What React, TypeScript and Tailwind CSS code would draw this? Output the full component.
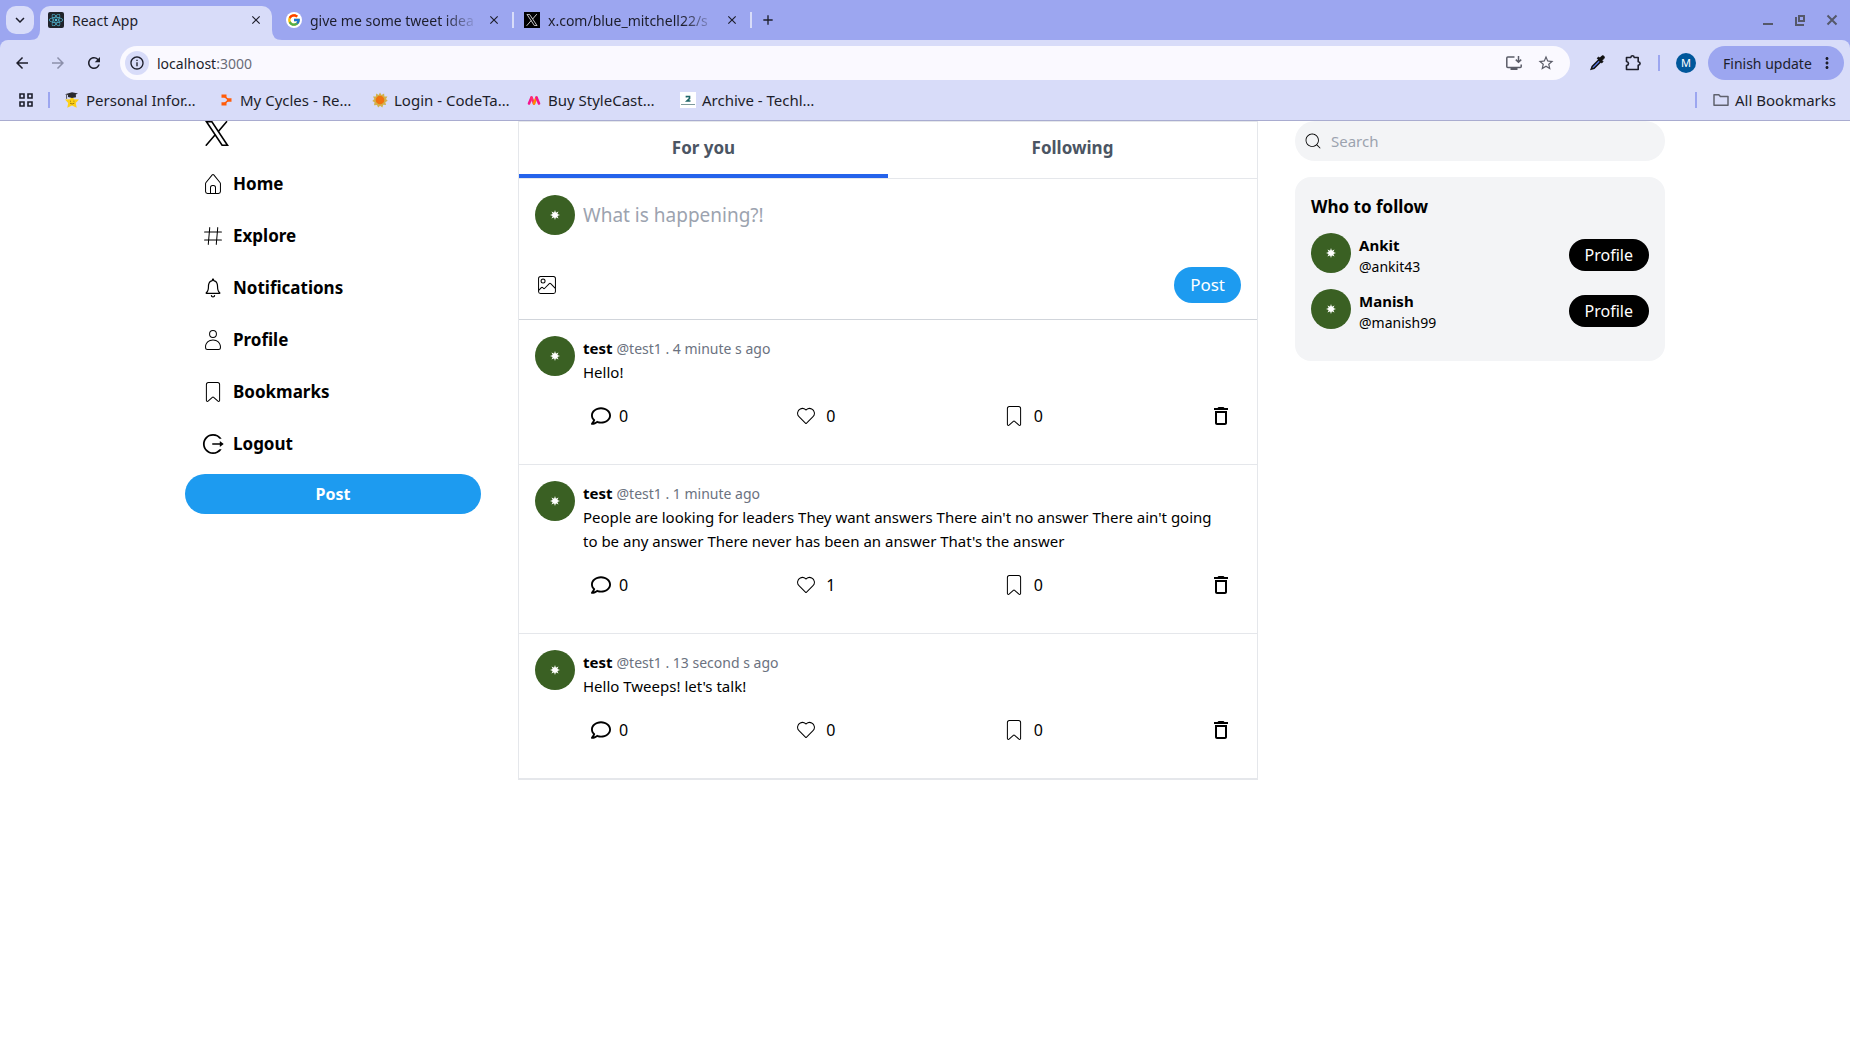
import type { ReactNode } from "react";
import { AiOutlineLogout } from "react-icons/ai";
import { CiBookmark, CiHashtag, CiHeart, CiHome, CiImageOn, CiSearch, CiUser } from "react-icons/ci";
import { FaReact, FaRegComment } from "react-icons/fa";
import { FcGoogle } from "react-icons/fc";
import { IoIosNotificationsOutline } from "react-icons/io";
import {
  MdAdd,
  MdArrowBack,
  MdArrowForward,
  MdClose,
  MdExpandMore,
  MdMoreVert,
  MdOutlineDelete,
  MdOutlineInfo,
  MdRefresh,
  MdStarOutline,
} from "react-icons/md";

function XMark({ className }: { className: string }) {
  return (
    <svg viewBox="0 0 24 25" fill="none" stroke="currentColor" strokeWidth="1.6" className={className} aria-hidden="true">
      <path d="M1.5 .8h5.4l15.6 23.4h-5.4z" />
      <path d="M22 .3 13.3 10.6M.8 24.7l9.6-11.2" />
    </svg>
  );
}

function StarGrad() {
  return (
    <svg viewBox="0 0 16 16" className="size-4" aria-hidden="true">
      <path d="m8 3.8 2 3.4 5 .4-3.2 3.3.9 4.9L8 13.6l-4.7 2.2.9-4.9L1 7.6l5-.4z" fill="#fdd017" />
      <path d="M1 2.2 8 .2l6 1.4-2.2 1 .2 2.6-4 .7-4-.9v-2z" fill="#2a2a2e" />
      <path d="M2.6 2.8v4" stroke="#2a2a2e" strokeWidth=".8" />
      <path d="M6 9.2h1M9.4 9.2h1M6 11.2q2.2 1.6 4.3 0" stroke="#8a6a00" strokeWidth=".8" fill="none" />
    </svg>
  );
}

function Cycles() {
  return (
    <svg viewBox="0 0 16 16" className="size-4" aria-hidden="true">
      <path d="M3.5 2.5h5v3.2h-5zM3.5 10.3h5v3.2h-5zM9 6.3h4.5v3.4H9z" fill="#ff5c0a" />
      <path d="m6 4 4.5 4L6 12" stroke="#ff5c0a" strokeWidth="1.6" fill="none" />
    </svg>
  );
}

function Sun() {
  return (
    <svg viewBox="0 0 16 16" className="size-4" aria-hidden="true">
      <path
        d="m8 .5 1.500 2.600 2.600-1.600.3 3 3-.1-1.400 2.700 1.700 1.700-2.400 1.400.8 2.700-2.900-.2-.8 2.700-2.300-1.600-2 1.700-1.100-2.600-3 .3.500-2.900L.3 9l2-1.900L1 4.600l2.900-.2L4.200 1.500l2.500 1.400z"
        fill="#d3b04a"
      />
      <circle cx="8" cy="8" r="4.3" fill="#f0720f" />
    </svg>
  );
}

function MShape() {
  return (
    <svg viewBox="0 0 16 16" className="size-4" fill="none" strokeWidth="2.6" strokeLinecap="round" aria-hidden="true">
      <path d="m3 11.5 2.5-6" stroke="#f5138f" />
      <path d="m5.5 5.5 2.5 6" stroke="#ff2d6c" />
      <path d="m8 11.5 2.5-6" stroke="#ff8a00" />
      <path d="m10.5 5.5 2.5 6" stroke="#f5138f" />
    </svg>
  );
}

function ArchiveMark() {
  return (
    <svg viewBox="0 0 16 16" className="size-4" aria-hidden="true">
      <path d="M0 0h16v16H0z" fill="#fff" />
      <path d="M6.5 5.5v-1h3v2L7 9h3.5" stroke="#1f6668" strokeWidth="1.7" fill="none" />
      <path d="M1 12.5h14" stroke="#7d9a9c" />
    </svg>
  );
}

function TabFoot({ side }: { side: "left" | "right" }) {
  return (
    <svg
      viewBox="0 0 10 10"
      className={side === "left" ? "absolute bottom-0 right-full size-2.5" : "absolute bottom-0 left-full size-2.5"}
      aria-hidden="true"
    >
      <path d={side === "left" ? "M10 0v10H0Q10 10 10 0z" : "M0 0v10h10Q0 10 0 0z"} fill="#d8dcf9" />
    </svg>
  );
}

function BrowserTab({ icon, title, active = false }: { icon: ReactNode; title: string; active?: boolean }) {
  return (
    <div
      className={
        active
          ? "relative flex h-[34px] w-[232px] items-center gap-2 rounded-t-[10px] bg-[#d8dcf9] px-2 pb-1.5"
          : "flex h-[34px] w-[238px] items-center gap-2 pb-1.5 pl-3.5 pr-2"
      }
    >
      {active && <TabFoot side="left" />}
      {active && <TabFoot side="right" />}
      {icon}
      <span
        className={
          active
            ? "flex-1 overflow-hidden whitespace-nowrap"
            : "flex-1 overflow-hidden whitespace-nowrap mask-r-from-80% mask-r-to-100%"
        }
      >
        {title}
      </span>
      <button type="button" aria-label={`Close ${title}`} className="flex size-4 items-center justify-center">
        <MdClose className="size-3.5" />
      </button>
      {!active && <span className="-mr-3 ml-0.5 h-4 w-0.5 bg-[#d8dcf9]" />}
    </div>
  );
}

const bookmarks = [
  { icon: <StarGrad />, label: "Personal Infor…" },
  { icon: <Cycles />, label: "My Cycles - Re…" },
  { icon: <Sun />, label: "Login - CodeTa…" },
  { icon: <MShape />, label: "Buy StyleCast…" },
  { icon: <ArchiveMark />, label: "Archive - Techl…" },
];

function Browser() {
  return (
    <header className="bg-[#9ca6f0] text-[#1d1e2b]">
      <div className="flex h-10 items-start pl-1.5 pt-1.5 text-[14px]">
        <button type="button" aria-label="Search tabs" className="mr-1.5 flex size-7 items-center justify-center rounded-[10px] bg-[#d8dcf9]">
          <MdExpandMore className="size-[18px]" />
        </button>
        <BrowserTab
          active
          title="React App"
          icon={
            <span className="flex size-4 items-center justify-center rounded-xs bg-[#20232a]">
              <FaReact className="size-3.5 text-[#53c1de]" />
            </span>
          }
        />
        <BrowserTab
          title="give me some tweet idea"
          icon={
            <span className="flex size-4 items-center justify-center rounded-full bg-white">
              <FcGoogle className="size-3.5" />
            </span>
          }
        />
        <BrowserTab
          title="x.com/blue_mitchell22/s"
          icon={
            <span className="flex size-4 items-center justify-center bg-black text-white">
              <XMark className="size-3" />
            </span>
          }
        />
        <button type="button" aria-label="New tab" className="ml-1.5 flex size-7 items-center justify-center">
          <MdAdd className="size-4" />
        </button>
        <div className="ml-auto flex h-7 items-center gap-[18px] pr-[11px] text-[#55586a]">
          <button type="button" aria-label="Minimize">
            <svg viewBox="0 0 14 14" className="size-3.5" aria-hidden="true">
              <path d="M2 11h10" stroke="currentColor" strokeWidth="2" />
            </svg>
          </button>
          <button type="button" aria-label="Restore">
            <svg viewBox="0 0 14 14" className="size-3.5" fill="none" stroke="currentColor" strokeWidth="2" aria-hidden="true">
              <path d="M6 3h5v5H6zM3 4v8h8" />
            </svg>
          </button>
          <button type="button" aria-label="Close window">
            <svg viewBox="0 0 14 14" className="size-3.5" fill="none" stroke="currentColor" strokeWidth="2" aria-hidden="true">
              <path d="m2.5 2.5 9 9M11.5 2.5l-9 9" />
            </svg>
          </button>
        </div>
      </div>

      <div className="rounded-t-lg border-b border-[#a9acd0] bg-[#d8dcf9]">
        <div className="flex h-10 items-end pl-3 pr-1.5 text-[14px]">
          <div className="flex h-[34px] items-center gap-4">
            <button type="button" aria-label="Back" className="flex w-5 justify-center">
              <MdArrowBack className="size-[18px]" />
            </button>
            <button type="button" aria-label="Forward" className="flex w-5 justify-center text-[#8c90ab]">
              <MdArrowForward className="size-[18px]" />
            </button>
            <button type="button" aria-label="Reload" className="flex w-5 justify-center">
              <MdRefresh className="size-[18px]" />
            </button>
          </div>
          <div className="ml-4 flex h-[34px] flex-1 items-center rounded-full bg-[#faf9ff] pl-[5px] pr-[15px]">
            <span className="flex size-6 items-center justify-center rounded-full bg-[#d8dcf9]">
              <MdOutlineInfo className="size-4" />
            </span>
            <span className="ml-2 flex-1">
              localhost<span className="text-[#6a6c78]">:3000</span>
            </span>
            <button type="button" aria-label="Install app" className="mr-3.5 text-[#5a5c68]">
              <svg viewBox="0 0 18 18" className="size-[18px]" fill="none" stroke="currentColor" strokeWidth="1.5" aria-hidden="true">
                <path d="M9.5 3H2.8q-1 0-1 1v8.5q0 1 1 1h12.4q1 0 1-1v-2M13.5 2v6M10.8 5.6l2.7 2.7 2.7-2.7" />
                <path d="M5.5 15h7" strokeWidth="2" />
              </svg>
            </button>
            <button type="button" aria-label="Bookmark this tab" className="text-[#5a5c68]">
              <MdStarOutline className="size-[18px]" />
            </button>
          </div>
          <div className="flex h-[34px] items-center">
            <button type="button" aria-label="Color picker" className="ml-[18px]">
              <svg viewBox="0 0 18 18" className="size-[18px]" aria-hidden="true">
                <path d="m3.2 15.2 1-2.8 6.600-6.600 1.900 1.900-6.600 6.600z" fill="#5b7cf0" stroke="#111" strokeWidth="1.5" />
                <path d="M9.2 4.3 10.6 3l1.100 1.100 1.900-1.900q1.300-1 2.300 0t0 2.300L14 6.400l1.100 1.100-1.400 1.400z" fill="#111" stroke="#111" />
              </svg>
            </button>
            <button type="button" aria-label="Extensions" className="ml-[18px]">
              <svg viewBox="0 0 18 18" className="size-[18px]" fill="none" stroke="currentColor" strokeWidth="1.6" strokeLinejoin="round" aria-hidden="true">
                <path d="M2.5 3.5h4.3q.2-1.7 1.7-1.7t1.7 1.7h4v4.3q1.900.2 1.900 1.700t-1.900 1.700v4.300H2.500v-4q2-.3 2-2t-2-2z" />
              </svg>
            </button>
            <span className="ml-4 h-4 w-0.5 bg-[#9ca6f0]" />
            <span className="ml-4 flex size-5 items-center justify-center rounded-full bg-[#00579b] text-[11px] text-white">M</span>
            <button type="button" className="ml-3 flex h-[34px] w-[136px] items-center justify-between rounded-full bg-[#9ca6f0] pl-[15px] pr-2">
              Finish update
              <MdMoreVert className="size-[18px]" />
            </button>
          </div>
        </div>

        <nav aria-label="Bookmarks bar" className="flex h-10 items-center pl-[18px] pr-3.5 text-[15px]">
          <button type="button" aria-label="Tab groups">
            <svg viewBox="0 0 16 16" className="size-4" fill="none" stroke="currentColor" strokeWidth="1.6" aria-hidden="true">
              <path d="M2 2h4v4H2zM10 2h4v4h-4zM2 10h4v4H2zM10 10h4v4h-4z" />
            </svg>
          </button>
          <span className="mx-3.5 h-4 w-0.5 bg-[#9ca6f0]" />
          {bookmarks.map((b) => (
            <a key={b.label} href="#" className="flex w-[154px] items-center gap-1.5 whitespace-nowrap">
              {b.icon}
              {b.label}
            </a>
          ))}
          <span className="ml-auto h-4 w-0.5 bg-[#9ca6f0]" />
          <button type="button" className="ml-4 flex items-center gap-1.5">
            <svg viewBox="0 0 16 16" className="size-4" fill="none" stroke="#5f616e" strokeWidth="1.5" strokeLinejoin="round" aria-hidden="true">
              <path d="M1 2.8h4.8l1.6 1.8H15v8.6H1z" />
            </svg>
            All Bookmarks
          </button>
        </nav>
      </div>
    </header>
  );
}

function Avatar() {
  return (
    <svg viewBox="0 0 40 40" className="size-10 shrink-0" aria-hidden="true">
      <circle cx="20" cy="20" r="20" fill="#3a6023" />
      <path
        d="m20 15 .9 2.700 2.600-1.200-1.200 2.600 2.700.9-2.700.9 1.200 2.600-2.600-1.200L20 25l-.9-2.700-2.600 1.200 1.200-2.600L15 20l2.700-.9-1.200-2.600 2.600 1.200z"
        fill="#fff"
      />
      <circle cx="20" cy="20" r="2.5" fill="#fff" />
    </svg>
  );
}

const nav = [
  { icon: CiHome, label: "Home" },
  { icon: CiHashtag, label: "Explore" },
  { icon: IoIosNotificationsOutline, label: "Notifications" },
  { icon: CiUser, label: "Profile" },
  { icon: CiBookmark, label: "Bookmarks" },
  { icon: AiOutlineLogout, label: "Logout" },
];

function LeftSidebar() {
  return (
    <aside className="w-[20%]">
      <a href="#" aria-label="X" className="block pb-3 pl-5">
        <XMark className="h-[25px] w-6" />
      </a>
      <nav>
        {nav.map(({ icon: Icon, label }) => (
          <a key={label} href="#" className="mb-2 flex h-11 items-center gap-2 px-4 text-[17px] font-bold first:mt-1 last:mb-1">
            <Icon className="size-6" />
            {label}
          </a>
        ))}
      </nav>
      <button type="button" className="mt-1 h-10 w-full rounded-full bg-[#1d9bf0] text-[16px] font-bold text-white">
        Post
      </button>
    </aside>
  );
}

const tweets = [
  { time: "4 minute s ago", text: "Hello!", likes: 0 },
  {
    time: "1 minute ago",
    text: "People are looking for leaders They want answers There ain't no answer There ain't going to be any answer There never has been an answer That's the answer",
    likes: 1,
  },
  { time: "13 second s ago", text: "Hello Tweeps! let's talk!", likes: 0 },
];

function Action({ label, count, children }: { label: string; count: number; children: ReactNode }) {
  return (
    <div className="flex items-center">
      <button type="button" aria-label={label} className="p-2">
        {children}
      </button>
      <span>{count}</span>
    </div>
  );
}

function Tweet({ time, text, likes }: { time: string; text: string; likes: number }) {
  return (
    <article className="flex gap-2 border-b border-[#e5e7eb] p-4">
      <Avatar />
      <div className="flex-1">
        <div className="flex h-6 items-center gap-1">
          <h2 className="text-[15px] font-bold">test</h2>
          <p className="text-[14px] text-[#6b7280]">@test1 . {time}</p>
        </div>
        <p className="pr-4 text-[15px] leading-6">{text}</p>
        <div className="my-3 flex items-center justify-between">
          <Action label="Reply" count={0}>
            <FaRegComment className="size-5" />
          </Action>
          <Action label="Like" count={likes}>
            <CiHeart className="size-6" />
          </Action>
          <Action label="Bookmark" count={0}>
            <CiBookmark className="size-6" />
          </Action>
          <button type="button" aria-label="Delete" className="p-2">
            <MdOutlineDelete className="size-6" />
          </button>
        </div>
      </div>
    </article>
  );
}

function Feed() {
  return (
    <main className="w-[50%] border border-[#e5e7eb]">
      <div className="flex border-b border-[#e5e7eb] text-[17px] leading-7 font-bold text-[#4b5563]">
        <button type="button" className="flex-1 border-b-4 border-[#2563eb] py-3">
          For you
        </button>
        <button type="button" className="flex-1 border-b-4 border-transparent py-3">
          Following
        </button>
      </div>
      <form className="border-b border-[#d1d5db] p-4">
        <div className="flex items-center gap-2">
          <Avatar />
          <input
            type="text"
            aria-label="What is happening?!"
            placeholder="What is happening?!"
            className="w-full text-[19px] outline-none placeholder:text-[#9ca3af]"
          />
        </div>
        <div className="mt-8 flex items-center justify-between">
          <button type="button" aria-label="Add image">
            <CiImageOn className="size-6" />
          </button>
          <button type="button" className="h-9 rounded-full bg-[#1d9bf0] px-4 text-[17px] text-white">
            Post
          </button>
        </div>
      </form>
      {tweets.map((t) => (
        <Tweet key={t.time} {...t} />
      ))}
    </main>
  );
}

const people = [
  { name: "Ankit", handle: "@ankit43" },
  { name: "Manish", handle: "@manish99" },
];

function RightSidebar() {
  return (
    <aside className="w-[25%]">
      <div className="flex h-10 items-center rounded-full bg-gray-100 px-2">
        <CiSearch className="size-5" />
        <input
          type="search"
          aria-label="Search"
          placeholder="Search"
          className="flex-1 bg-transparent px-2 text-[15px] outline-none placeholder:text-[#9ca3af]"
        />
      </div>
      <section className="mt-4 rounded-2xl bg-gray-100 p-4">
        <h2 className="text-[17px] leading-7 font-bold">Who to follow</h2>
        {people.map((p) => (
          <div key={p.name} className="my-3 flex items-center justify-between">
            <div className="flex gap-2">
              <Avatar />
              <div>
                <h3 className="text-[15px] leading-6 font-bold">{p.name}</h3>
                <p className="text-[14px] leading-5">{p.handle}</p>
              </div>
            </div>
            <button type="button" className="h-8 rounded-full bg-black px-4 text-[16px] text-white">
              Profile
            </button>
          </div>
        ))}
      </section>
    </aside>
  );
}

export default function App() {
  return (
    <div className="min-h-screen bg-white font-['Noto_Sans',sans-serif] text-black">
      <Browser />
      <div className="mx-auto flex w-[80%] items-start justify-between">
        <LeftSidebar />
        <Feed />
        <RightSidebar />
      </div>
    </div>
  );
}
